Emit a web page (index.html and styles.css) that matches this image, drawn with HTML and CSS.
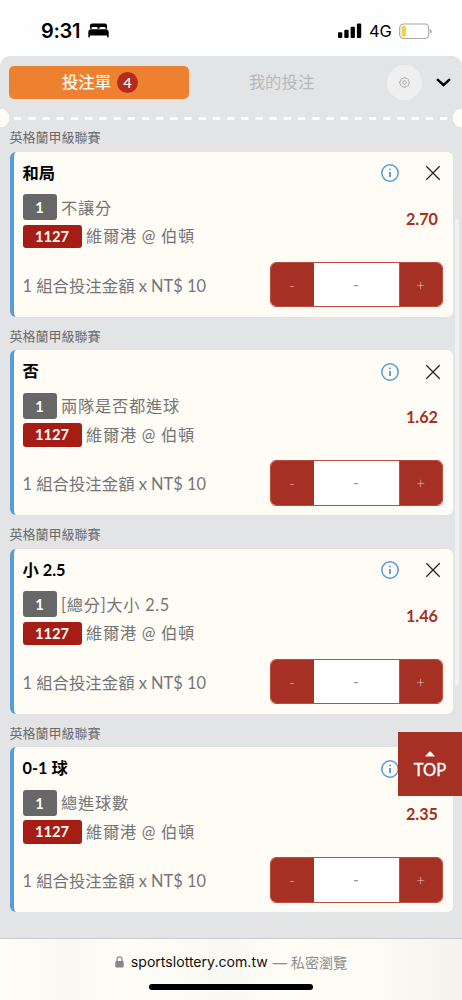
FILE: index.html
```html
<!DOCTYPE html>
<html lang="zh-Hant">
<head>
<meta charset="utf-8">
<meta name="viewport" content="width=device-width, initial-scale=1">
<title>投注單</title>
<link rel="stylesheet" href="styles.css">
</head>
<body>
<svg class="defs" width="0" height="0">
  <symbol id="info" viewBox="0 0 18 18"><circle cx="9" cy="9" r="8.2" fill="none" stroke="currentColor" stroke-width="1.5"/><circle cx="9" cy="5.4" r=".9" fill="currentColor"/><path d="M9 8v5" stroke="currentColor" stroke-width="1.9"/></symbol>
  <symbol id="close" viewBox="0 0 16 16"><path d="M1.3 1.3l13.4 13.4M14.7 1.3L1.3 14.7" stroke="currentColor" stroke-width="1.25"/></symbol>
</svg>
<div class="phone">
  <header class="status">
    <span class="time">9:31</span>
    <svg class="bed" width="21" height="15" viewBox="0 0 21 15"><path d="M2 5.800V2.600Q2 .4 4.200.4h12.600Q19 .4 19 2.600v3.200h-1.600V5q0-1-1-1h-3.900q-1 0-1 1v.8h-2V5q0-1-1-1H4.600q-1 0-1 1v.8z"/><path d="M3 6.300h15q2.700.3 2.700 3v4.400q0 .8-.8.800t-.8-.8V12.400H1.900v1.300q0 .8-.8.800t-.8-.8V9.300q0-2.700 2.700-3z"/></svg>
    <svg class="signal" width="24" height="16" viewBox="0 0 24 16"><rect x="0" y="9.300" width="4.300" height="5.700" rx="1"/><rect x="6.300" y="6.800" width="4.300" height="8.200" rx="1"/><rect x="12.600" y="3.700" width="4.300" height="11.300" rx="1"/><rect x="18.900" y=".5" width="4.300" height="14.500" rx="1"/></svg>
    <span class="network">4G</span>
    <svg class="battery" width="33" height="17" viewBox="0 0 33 17"><rect x=".7" y="1" width="29" height="14.500" rx="4" fill="none" stroke="#a3a3a3" stroke-width="1.100"/><rect x="2.700" y="3" width="4" height="10.500" rx="1.200" fill="#f7cb46"/><path d="M31 6v4.500q1.600-.7 1.600-2.250T31 6z" fill="#a3a3a3"/></svg>
  </header>
  <main class="sheet">
    <nav class="tabs">
      <div class="tab active">投注單<span class="count">4</span></div>
      <div class="tab">我的投注</div>
      <div class="settings"><svg width="11" height="11" viewBox="0 0 12 12" fill="none" stroke="#999" stroke-width=".8"><path d="M5 .7h2l.5 1.200 1.300-.3 1.500 1.500-.3 1.300 1.300.6v2l-1.300.6.3 1.300-1.500 1.500-1.300-.3-.5 1.200H5l-.5-1.200-1.300.3-1.500-1.500.3-1.300L.7 7V5L2 4.400l-.3-1.300 1.500-1.500 1.300.3z"/><circle cx="6" cy="6" r="2"/></svg></div>
      <svg class="chevron" width="15" height="10" viewBox="0 0 15 10"><path d="M1.800 1.800l5.700 5.200 5.700-5.200" fill="none" stroke="#000" stroke-width="2.500" stroke-linecap="round"/></svg>
    </nav>
    <div class="tear"><svg width="462" height="3" viewBox="0 0 462 3"><path d="M14 1.500h434" stroke="#fffcf5" stroke-width="3" stroke-dasharray="7.300 6.900"/></svg></div>
    <div class="bets">
      <section class="bet">
        <h2 class="league">英格蘭甲級聯賽</h2>
        <article class="card">
          <div class="head"><h3>和局</h3><svg class="info" width="18" height="18"><use href="#info"/></svg><svg class="close" width="16" height="16"><use href="#close"/></svg></div>
          <div class="body"><div class="event"><div class="line"><b class="tag">1</b><span>不讓分</span></div><div class="line"><b class="tag code">1127</b><span>維爾港 @ 伯頓</span></div></div><strong class="odds">2.70</strong></div>
          <div class="foot"><span>1 組合投注金額 x NT$ 10</span><div class="stepper"><span class="btn">-</span><span class="value">-</span><span class="btn plus">+</span></div></div>
        </article>
      </section>
      <section class="bet">
        <h2 class="league">英格蘭甲級聯賽</h2>
        <article class="card">
          <div class="head"><h3>否</h3><svg class="info" width="18" height="18"><use href="#info"/></svg><svg class="close" width="16" height="16"><use href="#close"/></svg></div>
          <div class="body"><div class="event"><div class="line"><b class="tag">1</b><span>兩隊是否都進球</span></div><div class="line"><b class="tag code">1127</b><span>維爾港 @ 伯頓</span></div></div><strong class="odds">1.62</strong></div>
          <div class="foot"><span>1 組合投注金額 x NT$ 10</span><div class="stepper"><span class="btn">-</span><span class="value">-</span><span class="btn plus">+</span></div></div>
        </article>
      </section>
      <section class="bet">
        <h2 class="league">英格蘭甲級聯賽</h2>
        <article class="card">
          <div class="head"><h3>小 2.5</h3><svg class="info" width="18" height="18"><use href="#info"/></svg><svg class="close" width="16" height="16"><use href="#close"/></svg></div>
          <div class="body"><div class="event"><div class="line"><b class="tag">1</b><span>[總分]大小 2.5</span></div><div class="line"><b class="tag code">1127</b><span>維爾港 @ 伯頓</span></div></div><strong class="odds">1.46</strong></div>
          <div class="foot"><span>1 組合投注金額 x NT$ 10</span><div class="stepper"><span class="btn">-</span><span class="value">-</span><span class="btn plus">+</span></div></div>
        </article>
      </section>
      <section class="bet">
        <h2 class="league">英格蘭甲級聯賽</h2>
        <article class="card">
          <div class="head"><h3>0-1 球</h3><svg class="info" width="18" height="18"><use href="#info"/></svg><svg class="close" width="16" height="16"><use href="#close"/></svg></div>
          <div class="body"><div class="event"><div class="line"><b class="tag">1</b><span>總進球數</span></div><div class="line"><b class="tag code">1127</b><span>維爾港 @ 伯頓</span></div></div><strong class="odds">2.35</strong></div>
          <div class="foot"><span>1 組合投注金額 x NT$ 10</span><div class="stepper"><span class="btn">-</span><span class="value">-</span><span class="btn plus">+</span></div></div>
        </article>
      </section>
    </div>
  </main>
  <footer class="browser">
    <div class="address"><svg width="9" height="12" viewBox="0 0 9 12"><rect x=".3" y="5" width="8.400" height="6.500" rx="1.200" fill="#85858a"/><path d="M2 5.500V3.300a2.500 2.500 0 0 1 5 0v2.200" fill="none" stroke="#85858a" stroke-width="1.200"/></svg><span class="host">sportslottery.com.tw</span><span class="private">— 私密瀏覽</span></div>
    <div class="home"></div>
  </footer>
  <div class="scrollbar"></div>
  <div class="top"><svg width="10" height="6" viewBox="0 0 10 6"><path d="M0 5.500L4.200.8Q5 0 5.800.8L10 5.500z" fill="#fff"/></svg><span>TOP</span></div>
</div>
</body>
</html>
```

FILE: styles.css
```css
* { box-sizing: border-box; }
body { margin: 0; background: #fefefe; font-family: Lato, "Noto Sans CJK TC", sans-serif; color: #757575; }
h2, h3 { margin: 0; }
svg { display: block; flex: none; }
.defs { position: absolute; }
.phone { position: relative; width: 462px; height: 1000px; overflow: hidden; display: flex; flex-direction: column; }
.status { height: 56px; flex: none; display: flex; align-items: center; padding: 6px 0 0 41px; color: #000; font-family: Inter, sans-serif; }
.time { width: 46.5px; font-size: 20px; font-weight: 600; letter-spacing: -.3px; line-height: 24px; white-space: nowrap; }
.bed { margin-top: -1px; }
.signal { margin-left: 229.5px; }
.network { width: 30px; margin-left: 7px; font-size: 16.5px; font-weight: 400; letter-spacing: -.2px; }
.sheet { height: 882px; flex: none; background: #e3e4e6; border-radius: 10px 10px 0 0; }
.tabs { height: 53px; display: flex; align-items: center; padding: 0 11px 1px 9px; }
.tab { width: 180px; height: 33px; display: flex; align-items: center; justify-content: center; font-size: 16.4px; line-height: 32px; color: #b7b8ba; padding: 0 0 0 5px; }
.tab.active { background: #ee8130; color: #fffcf5; border-radius: 5px; padding: 0 0 1px 2px; -webkit-text-stroke: .2px #fffcf5; }
.count { width: 21px; height: 21px; margin: 1px 0 0 6px; border-radius: 50%; background: #b22c20; color: #fffcf5; font-size: 14px; line-height: 21px; text-align: center; }
.settings { width: 35px; height: 35px; margin-left: 18px; display: flex; align-items: center; justify-content: center; border-radius: 50%; background: #efefef; }
.chevron { margin-left: 14px; margin-top: 1px; }
.tear { height: 18px; display: flex; align-items: center; background: radial-gradient(circle at 0 50%, #fffcf5 9px, transparent 9.5px), radial-gradient(circle at 100% 50%, #fffcf5 9px, transparent 9.5px); }
.bets { padding: 0 9.5px; margin-top: -9px; }
.bet { height: 198.5px; }
.league { height: 33.5px; padding-top: 10px; font-size: 13px; line-height: 19px; font-weight: 400; color: #6b6b6b; }
.card { height: 165px; border-left: 4px solid #559cda; border-radius: 6px; background: #fffcf5; padding: 10px 10px 0 9px; }
.head { height: 23px; display: flex; align-items: center; }
.head h3 { flex: 1; font-size: 16.3px; line-height: 22px; padding-bottom: 1px; font-weight: 700; color: #000; }
.info { color: #559cda; }
.close { color: #222; margin-left: 26px; margin-right: 2px; }
.body { height: 68px; padding-top: 9.5px; display: flex; align-items: flex-start; justify-content: space-between; }
.event { display: flex; flex-direction: column; gap: 4.5px; }
.line { display: flex; align-items: center; gap: 4.5px; height: 26px; font-size: 16.3px; letter-spacing: .7px; line-height: 22px; white-space: nowrap; }
.line > span { padding-top: 1px; }
.line + .line { height: 23.5px; }
.line + .line > span { padding: 0; }
.tag { width: 34px; height: 26px; border-radius: 3px; background: #676767; color: #fffcf5; font-size: 14.7px; line-height: 26px; letter-spacing: 0; text-align: center; }
.tag.code { width: 59px; height: 23.5px; line-height: 23px; background: #a51d14; }
.odds { margin: 14.5px 4.5px 0 0; color: #a53023; font-size: 16.2px; line-height: 20px; }
.foot { height: 54px; padding-top: 10px; display: flex; align-items: center; justify-content: space-between; font-size: 16.4px; white-space: nowrap; }
.stepper { width: 173px; height: 45.500px; display: flex; border: 1px solid #bd4d40; border-radius: 6px; overflow: hidden; background: #fff; }
.btn { width: 43px; background: #a53023; color: #e7c1ba; font-size: 15px; font-weight: 300; line-height: 44px; text-align: center; }
.plus { border-left: 1px solid #bd4d40; }
.value { flex: 1; line-height: 44px; text-align: center; color: #999; }
.browser { height: 62px; flex: none; background: linear-gradient(90deg, #fffdf6, #f9f8f2 15%, #fffdf6 27%, #f9f8f2 50%, #fffdf6 62%, #fdfbf4 80%, #f4f3ee); border-top: 1px solid #c9c9cb; }
.address { height: 45px; display: flex; align-items: center; justify-content: center; font-family: Inter, "Noto Sans CJK TC", sans-serif; font-size: 14.1px; white-space: nowrap; }
.host { margin: 0 5px 0 7px; color: #111; }
.private { color: #8b8b8b; }
.home { width: 164px; height: 6px; margin: 0 auto; border-radius: 3px; background: #000; }
.scrollbar { position: absolute; right: 3px; top: 219px; width: 4px; height: 467px; border-radius: 2px; background: #f0f0f1; }
.top { position: absolute; right: 0; top: 732px; width: 64px; height: 64px; padding: 19px 0 0; background: #a53023; color: #fff; display: flex; flex-direction: column; align-items: center; font-size: 16.5px; line-height: 24px; }
.top span { margin-top: 1px; -webkit-text-stroke: .3px #fff; }
```
